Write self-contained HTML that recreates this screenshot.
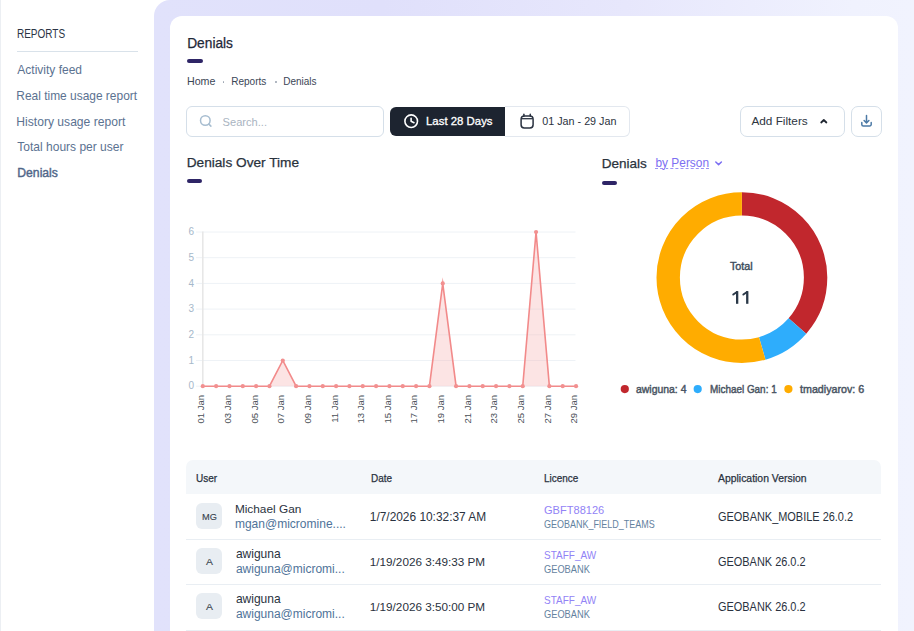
<!DOCTYPE html>
<html><head><meta charset="utf-8"><style>
html,body{margin:0;padding:0;width:914px;height:631px;overflow:hidden;background:#fff;font-family:"Liberation Sans",sans-serif;}
.r{position:absolute;}
.t{position:absolute;white-space:nowrap;line-height:1;}
svg{position:absolute;left:0;top:0;}
</style></head><body>
<div class="r" style="left:0px;top:0px;width:1px;height:631px;background:#eceff3"></div>
<div class="r" style="left:17px;top:51px;width:121px;height:1px;background:#d9e2ea"></div>
<div class="r" style="left:154px;top:0px;width:760px;height:640px;background:linear-gradient(90deg,#e1e2fb 0%,#e0e0fb 30%,#e7e7fc 62%,#f0f2fe 92%,#f1f3fe 100%);border-radius:16px 0 0 0"></div>
<div class="r" style="left:170px;top:16px;width:728px;height:684px;background:#fff;border-radius:12px"></div>
<div class="r" style="left:187px;top:59px;width:16px;height:4px;background:#2e2566;border-radius:2px"></div>
<div class="r" style="left:222.6px;top:81.1px;width:1.8000000000000114px;height:1.8000000000000114px;background:#9aa3b0;border-radius:50%"></div>
<div class="r" style="left:274.8px;top:81.1px;width:1.8000000000000114px;height:1.8000000000000114px;background:#9aa3b0;border-radius:50%"></div>
<div class="r" style="left:186px;top:106px;width:198px;height:31px;border:1px solid #d5dfe9;border-radius:6px;box-sizing:border-box"></div>
<div class="r" style="left:390px;top:107px;width:115px;height:29px;background:#1d2430;border-radius:6px 0 0 6px"></div>
<div class="r" style="left:505px;top:106px;width:125px;height:31px;border:1px solid #e3e8ef;border-left:none;border-radius:0 6px 6px 0;box-sizing:border-box"></div>
<div class="r" style="left:740px;top:106px;width:105px;height:31px;border:1px solid #d5dfe9;border-radius:7px;box-sizing:border-box"></div>
<div class="r" style="left:851px;top:106px;width:31px;height:31px;border:1px solid #d5dfe9;border-radius:7px;box-sizing:border-box"></div>
<div class="r" style="left:186.5px;top:179px;width:15.5px;height:4px;background:#2e2566;border-radius:2px"></div>
<div class="r" style="left:602px;top:181px;width:15px;height:4px;background:#2e2566;border-radius:2px"></div>
<div class="r" style="left:186px;top:460px;width:695px;height:34px;background:#f4f7fa;border-radius:7px 7px 0 0"></div>
<div class="r" style="left:186px;top:539px;width:695px;height:1px;background:#e9eef3"></div>
<div class="r" style="left:196px;top:503px;width:26px;height:26px;background:#e8edf2;border-radius:6px"></div>
<div class="r" style="left:186px;top:584px;width:695px;height:1px;background:#e9eef3"></div>
<div class="r" style="left:196px;top:548px;width:26px;height:26px;background:#e8edf2;border-radius:6px"></div>
<div class="r" style="left:186px;top:630px;width:695px;height:1px;background:#e9eef3"></div>
<div class="r" style="left:196px;top:593px;width:26px;height:26px;background:#e8edf2;border-radius:6px"></div>
<svg width="914" height="631" viewBox="0 0 914 631">
<circle cx="205.3" cy="120.5" r="4.8" fill="none" stroke="#a7bdd0" stroke-width="1.5"/><line x1="208.9" y1="124.1" x2="210.9" y2="126.1" stroke="#a7bdd0" stroke-width="1.5" stroke-linecap="round"/>
<circle cx="411.2" cy="121.2" r="6.3" fill="none" stroke="#fff" stroke-width="1.6"/><path d="M411.1 118.2v3.1l2.9 1.4" fill="none" stroke="#fff" stroke-width="1.6" stroke-linecap="round" stroke-linejoin="round"/>
<rect x="521.1" y="116" width="12" height="12" rx="3.2" fill="none" stroke="#2a3240" stroke-width="1.5"/><line x1="521.5" y1="118.7" x2="532.7" y2="118.7" stroke="#2a3240" stroke-width="1.3"/><line x1="523.9" y1="114.3" x2="523.9" y2="116.3" stroke="#2a3240" stroke-width="1.4" stroke-linecap="round"/><line x1="530.3" y1="114.3" x2="530.3" y2="116.3" stroke="#2a3240" stroke-width="1.4" stroke-linecap="round"/>
<path d="M821.2 122.5l2.6-2.5 2.6 2.5" fill="none" stroke="#1f2630" stroke-width="1.75" stroke-linecap="round" stroke-linejoin="round"/>
<path d="M866.5 115.5v7.3M864.1 120.5l2.4 2.4 2.4-2.4M861.8 122.5v1.9a1.5 1.5 0 0 0 1.5 1.5h6.4a1.5 1.5 0 0 0 1.5-1.5v-1.9" fill="none" stroke="#4c7aa6" stroke-width="1.5" stroke-linecap="round" stroke-linejoin="round"/>
<path d="M715.8 162l2.8 2.6 2.8-2.6" fill="none" stroke="#7b6ef2" stroke-width="1.5" stroke-linecap="round" stroke-linejoin="round"/>
<line x1="196" y1="386.20" x2="575.5" y2="386.20" stroke="#eef2f6" stroke-width="1"/>
<line x1="196" y1="360.50" x2="575.5" y2="360.50" stroke="#eef2f6" stroke-width="1"/>
<line x1="196" y1="334.80" x2="575.5" y2="334.80" stroke="#eef2f6" stroke-width="1"/>
<line x1="196" y1="309.10" x2="575.5" y2="309.10" stroke="#eef2f6" stroke-width="1"/>
<line x1="196" y1="283.40" x2="575.5" y2="283.40" stroke="#eef2f6" stroke-width="1"/>
<line x1="196" y1="257.70" x2="575.5" y2="257.70" stroke="#eef2f6" stroke-width="1"/>
<line x1="196" y1="232.00" x2="575.5" y2="232.00" stroke="#eef2f6" stroke-width="1"/>
<line x1="202.8" y1="231.5" x2="202.8" y2="386" stroke="#e6e6e6" stroke-width="1.5"/>
<polygon points="202.80,386.20 216.13,386.20 229.46,386.20 242.79,386.20 256.12,386.20 269.45,386.20 282.78,360.50 296.11,386.20 309.44,386.20 322.77,386.20 336.10,386.20 349.43,386.20 362.76,386.20 376.09,386.20 389.42,386.20 402.75,386.20 416.08,386.20 429.41,386.20 442.74,283.40 456.07,386.20 469.40,386.20 482.73,386.20 496.06,386.20 509.39,386.20 522.72,386.20 536.05,232.00 549.38,386.20 562.71,386.20 576.04,386.20 576.04,386.2 202.80,386.2" fill="#f6b3b3" fill-opacity="0.35"/>
<polyline points="202.80,386.20 216.13,386.20 229.46,386.20 242.79,386.20 256.12,386.20 269.45,386.20 282.78,360.50 296.11,386.20 309.44,386.20 322.77,386.20 336.10,386.20 349.43,386.20 362.76,386.20 376.09,386.20 389.42,386.20 402.75,386.20 416.08,386.20 429.41,386.20 442.74,283.40 456.07,386.20 469.40,386.20 482.73,386.20 496.06,386.20 509.39,386.20 522.72,386.20 536.05,232.00 549.38,386.20 562.71,386.20 576.04,386.20" fill="none" stroke="#f28a8a" stroke-width="1.6" stroke-linejoin="miter" stroke-miterlimit="10"/>
<circle cx="202.80" cy="386.20" r="2.1" fill="#f29090"/>
<circle cx="216.13" cy="386.20" r="2.1" fill="#f29090"/>
<circle cx="229.46" cy="386.20" r="2.1" fill="#f29090"/>
<circle cx="242.79" cy="386.20" r="2.1" fill="#f29090"/>
<circle cx="256.12" cy="386.20" r="2.1" fill="#f29090"/>
<circle cx="269.45" cy="386.20" r="2.1" fill="#f29090"/>
<circle cx="282.78" cy="360.50" r="2.1" fill="#f29090"/>
<circle cx="296.11" cy="386.20" r="2.1" fill="#f29090"/>
<circle cx="309.44" cy="386.20" r="2.1" fill="#f29090"/>
<circle cx="322.77" cy="386.20" r="2.1" fill="#f29090"/>
<circle cx="336.10" cy="386.20" r="2.1" fill="#f29090"/>
<circle cx="349.43" cy="386.20" r="2.1" fill="#f29090"/>
<circle cx="362.76" cy="386.20" r="2.1" fill="#f29090"/>
<circle cx="376.09" cy="386.20" r="2.1" fill="#f29090"/>
<circle cx="389.42" cy="386.20" r="2.1" fill="#f29090"/>
<circle cx="402.75" cy="386.20" r="2.1" fill="#f29090"/>
<circle cx="416.08" cy="386.20" r="2.1" fill="#f29090"/>
<circle cx="429.41" cy="386.20" r="2.1" fill="#f29090"/>
<circle cx="442.74" cy="283.40" r="2.1" fill="#f29090"/>
<circle cx="456.07" cy="386.20" r="2.1" fill="#f29090"/>
<circle cx="469.40" cy="386.20" r="2.1" fill="#f29090"/>
<circle cx="482.73" cy="386.20" r="2.1" fill="#f29090"/>
<circle cx="496.06" cy="386.20" r="2.1" fill="#f29090"/>
<circle cx="509.39" cy="386.20" r="2.1" fill="#f29090"/>
<circle cx="522.72" cy="386.20" r="2.1" fill="#f29090"/>
<circle cx="536.05" cy="232.00" r="2.1" fill="#f29090"/>
<circle cx="549.38" cy="386.20" r="2.1" fill="#f29090"/>
<circle cx="562.71" cy="386.20" r="2.1" fill="#f29090"/>
<circle cx="576.04" cy="386.20" r="2.1" fill="#f29090"/>
<circle cx="741.9" cy="277.6" r="73.70" fill="none" stroke="#c1272d" stroke-width="23.40" stroke-dasharray="168.389 463.071" stroke-dashoffset="0.000" transform="rotate(-90 741.9 277.6)"/>
<circle cx="741.9" cy="277.6" r="73.70" fill="none" stroke="#2eadfc" stroke-width="23.40" stroke-dasharray="42.097 463.071" stroke-dashoffset="-168.389" transform="rotate(-90 741.9 277.6)"/>
<circle cx="741.9" cy="277.6" r="73.70" fill="none" stroke="#ffac00" stroke-width="23.40" stroke-dasharray="252.584 463.071" stroke-dashoffset="-210.487" transform="rotate(-90 741.9 277.6)"/>
<circle cx="624.8" cy="389.1" r="4.1" fill="#c1272d"/>
<circle cx="697.7" cy="389.1" r="4.1" fill="#2eadfc"/>
<circle cx="788.4" cy="389.1" r="4.1" fill="#ffac00"/>
<path d="M733.25 294.6 L736.95 291.9" fill="none" stroke="#2a3848" stroke-width="1.9" stroke-linecap="round"/><rect x="736.00" y="291.2" width="2.3" height="12.6" fill="#2a3848"/>
<path d="M743.35 294.6 L747.05 291.9" fill="none" stroke="#2a3848" stroke-width="1.9" stroke-linecap="round"/><rect x="746.10" y="291.2" width="2.3" height="12.6" fill="#2a3848"/>
</svg>
<div class="t" style="left:16.57px;top:28px;font-size:12.000px;color:#2b3445;transform:scaleX(0.8316);transform-origin:0 0;">REPORTS</div>
<div class="t" style="left:17.30px;top:64px;font-size:12.000px;color:#5b7291;">Activity feed</div>
<div class="t" style="left:16.30px;top:91px;font-size:11.951px;color:#5b7291;">Real time usage report</div>
<div class="t" style="left:16.30px;top:116px;font-size:12.124px;color:#5b7291;">History usage report</div>
<div class="t" style="left:17.30px;top:141px;font-size:12.023px;color:#5b7291;">Total hours per user</div>
<div class="t" style="left:17.30px;top:167px;font-size:12.181px;color:#4f6689;-webkit-text-stroke:0.4px #4f6689;">Denials</div>
<div class="t" style="left:187.20px;top:37px;font-size:13.744px;color:#1f2838;-webkit-text-stroke:0.25px #1f2838;">Denials</div>
<div class="t" style="left:187.00px;top:76px;font-size:10.663px;color:#3b4656;">Home</div>
<div class="t" style="left:231.20px;top:77px;font-size:10.065px;color:#3b4656;">Reports</div>
<div class="t" style="left:283.20px;top:77px;font-size:10.007px;color:#3b4656;">Denials</div>
<div class="t" style="left:222.60px;top:117px;font-size:11.108px;color:#a9b4c1;">Search...</div>
<div class="t" style="left:426.00px;top:116px;font-size:11.415px;color:#ffffff;-webkit-text-stroke:0.3px #ffffff;">Last 28 Days</div>
<div class="t" style="left:542.30px;top:116px;font-size:10.752px;color:#2a3240;">01 Jan - 29 Jan</div>
<div class="t" style="left:751.40px;top:115px;font-size:11.790px;color:#2d3541;">Add Filters</div>
<div class="t" style="left:186.70px;top:156px;font-size:13.675px;color:#2a323d;-webkit-text-stroke:0.25px #2a323d;">Denials Over Time</div>
<div class="t" style="left:601.70px;top:157px;font-size:13.560px;color:#2a323d;-webkit-text-stroke:0.25px #2a323d;">Denials</div>
<div class="t" style="left:655.50px;top:158px;font-size:11.908px;color:#7b6ef2;text-decoration:underline dashed #9b92f5;text-underline-offset:1px;">by Person</div>
<div class="t" style="left:730.00px;top:261px;font-size:10.768px;color:#3c4b5c;-webkit-text-stroke:0.4px #3c4b5c;">Total</div>
<div class="t" style="left:635.60px;top:384px;font-size:10.800px;color:#4a5563;transform:scaleX(0.9660);transform-origin:0 0;-webkit-text-stroke:0.45px #4a5563;">awiguna: 4</div>
<div class="t" style="left:710.00px;top:384px;font-size:10.800px;color:#4a5563;transform:scaleX(0.9178);transform-origin:0 0;-webkit-text-stroke:0.45px #4a5563;">Michael Gan: 1</div>
<div class="t" style="left:799.80px;top:384px;font-size:10.800px;color:#4a5563;transform:scaleX(0.9908);transform-origin:0 0;-webkit-text-stroke:0.45px #4a5563;">tmadiyarov: 6</div>
<div class="t" style="left:196.30px;top:473px;font-size:10.800px;color:#2a3240;transform:scaleX(0.9261);transform-origin:0 0;-webkit-text-stroke:0.25px #2a3240;">User</div>
<div class="t" style="left:370.50px;top:473px;font-size:10.800px;color:#2a3240;transform:scaleX(0.9217);transform-origin:0 0;-webkit-text-stroke:0.25px #2a3240;">Date</div>
<div class="t" style="left:544.20px;top:473px;font-size:10.800px;color:#2a3240;transform:scaleX(0.9189);transform-origin:0 0;-webkit-text-stroke:0.25px #2a3240;">Licence</div>
<div class="t" style="left:718.10px;top:473px;font-size:10.800px;color:#2a3240;transform:scaleX(0.9641);transform-origin:0 0;-webkit-text-stroke:0.25px #2a3240;">Application Version</div>
<div class="t" style="left:201.90px;top:513px;font-size:9.300px;color:#343d4a;transform:scaleX(0.9933);transform-origin:0 0;-webkit-text-stroke:0.1px #343d4a;">MG</div>
<div class="t" style="left:234.90px;top:504px;font-size:11.837px;color:#2a3240;">Michael Gan</div>
<div class="t" style="left:234.90px;top:518px;font-size:12.022px;color:#4f7399;">mgan@micromine....</div>
<div class="t" style="left:369.80px;top:512px;font-size:11.907px;color:#2a3240;">1/7/2026 10:32:37 AM</div>
<div class="t" style="left:544.10px;top:505px;font-size:11.800px;color:#9283f6;transform:scaleX(0.9375);transform-origin:0 0;">GBFT88126</div>
<div class="t" style="left:544.10px;top:519px;font-size:10.600px;color:#6482a0;transform:scaleX(0.8473);transform-origin:0 0;">GEOBANK_FIELD_TEAMS</div>
<div class="t" style="left:718.20px;top:511px;font-size:12.000px;color:#2a3240;transform:scaleX(0.9122);transform-origin:0 0;">GEOBANK_MOBILE 26.0.2</div>
<div class="t" style="left:206.10px;top:558px;font-size:9.300px;color:#343d4a;transform:scaleX(1.1167);transform-origin:0 0;-webkit-text-stroke:0.1px #343d4a;">A</div>
<div class="t" style="left:235.90px;top:548px;font-size:12.029px;color:#2a3240;">awiguna</div>
<div class="t" style="left:235.90px;top:563px;font-size:12.011px;color:#4f7399;">awiguna@micromi...</div>
<div class="t" style="left:369.80px;top:556px;font-size:11.731px;color:#2a3240;">1/19/2026 3:49:33 PM</div>
<div class="t" style="left:544.10px;top:550px;font-size:11.800px;color:#9283f6;transform:scaleX(0.8468);transform-origin:0 0;">STAFF_AW</div>
<div class="t" style="left:544.10px;top:564px;font-size:10.600px;color:#6482a0;transform:scaleX(0.8750);transform-origin:0 0;">GEOBANK</div>
<div class="t" style="left:718.20px;top:556px;font-size:12.000px;color:#2a3240;transform:scaleX(0.9115);transform-origin:0 0;">GEOBANK 26.0.2</div>
<div class="t" style="left:206.10px;top:603px;font-size:9.300px;color:#343d4a;transform:scaleX(1.1167);transform-origin:0 0;-webkit-text-stroke:0.1px #343d4a;">A</div>
<div class="t" style="left:235.90px;top:593px;font-size:12.029px;color:#2a3240;">awiguna</div>
<div class="t" style="left:235.90px;top:608px;font-size:12.011px;color:#4f7399;">awiguna@micromi...</div>
<div class="t" style="left:369.80px;top:601px;font-size:11.731px;color:#2a3240;">1/19/2026 3:50:00 PM</div>
<div class="t" style="left:544.10px;top:595px;font-size:11.800px;color:#9283f6;transform:scaleX(0.8468);transform-origin:0 0;">STAFF_AW</div>
<div class="t" style="left:544.10px;top:609px;font-size:10.600px;color:#6482a0;transform:scaleX(0.8750);transform-origin:0 0;">GEOBANK</div>
<div class="t" style="left:718.20px;top:601px;font-size:12.000px;color:#2a3240;transform:scaleX(0.9115);transform-origin:0 0;">GEOBANK 26.0.2</div>
<div class="t" style="left:170px;width:24px;text-align:right;top:381.34px;font-size:10px;color:#a6b8ca">0</div>
<div class="t" style="left:170px;width:24px;text-align:right;top:355.64px;font-size:10px;color:#a6b8ca">1</div>
<div class="t" style="left:170px;width:24px;text-align:right;top:329.94px;font-size:10px;color:#a6b8ca">2</div>
<div class="t" style="left:170px;width:24px;text-align:right;top:304.24px;font-size:10px;color:#a6b8ca">3</div>
<div class="t" style="left:170px;width:24px;text-align:right;top:278.54px;font-size:10px;color:#a6b8ca">4</div>
<div class="t" style="left:170px;width:24px;text-align:right;top:252.84px;font-size:10px;color:#a6b8ca">5</div>
<div class="t" style="left:170px;width:24px;text-align:right;top:227.13px;font-size:10px;color:#a6b8ca">6</div>
<div class="t" style="left:201.20px;top:395.2px;font-size:9.5px;color:#4a4f57;transform-origin:0 0;transform:rotate(-90deg) translate(-100%,-50%);text-align:right;width:40px;line-height:12px;">01 Jan</div>
<div class="t" style="left:227.86px;top:395.2px;font-size:9.5px;color:#4a4f57;transform-origin:0 0;transform:rotate(-90deg) translate(-100%,-50%);text-align:right;width:40px;line-height:12px;">03 Jan</div>
<div class="t" style="left:254.52px;top:395.2px;font-size:9.5px;color:#4a4f57;transform-origin:0 0;transform:rotate(-90deg) translate(-100%,-50%);text-align:right;width:40px;line-height:12px;">05 Jan</div>
<div class="t" style="left:281.18px;top:395.2px;font-size:9.5px;color:#4a4f57;transform-origin:0 0;transform:rotate(-90deg) translate(-100%,-50%);text-align:right;width:40px;line-height:12px;">07 Jan</div>
<div class="t" style="left:307.84px;top:395.2px;font-size:9.5px;color:#4a4f57;transform-origin:0 0;transform:rotate(-90deg) translate(-100%,-50%);text-align:right;width:40px;line-height:12px;">09 Jan</div>
<div class="t" style="left:334.50px;top:395.2px;font-size:9.5px;color:#4a4f57;transform-origin:0 0;transform:rotate(-90deg) translate(-100%,-50%);text-align:right;width:40px;line-height:12px;">11 Jan</div>
<div class="t" style="left:361.16px;top:395.2px;font-size:9.5px;color:#4a4f57;transform-origin:0 0;transform:rotate(-90deg) translate(-100%,-50%);text-align:right;width:40px;line-height:12px;">13 Jan</div>
<div class="t" style="left:387.82px;top:395.2px;font-size:9.5px;color:#4a4f57;transform-origin:0 0;transform:rotate(-90deg) translate(-100%,-50%);text-align:right;width:40px;line-height:12px;">15 Jan</div>
<div class="t" style="left:414.48px;top:395.2px;font-size:9.5px;color:#4a4f57;transform-origin:0 0;transform:rotate(-90deg) translate(-100%,-50%);text-align:right;width:40px;line-height:12px;">17 Jan</div>
<div class="t" style="left:441.14px;top:395.2px;font-size:9.5px;color:#4a4f57;transform-origin:0 0;transform:rotate(-90deg) translate(-100%,-50%);text-align:right;width:40px;line-height:12px;">19 Jan</div>
<div class="t" style="left:467.80px;top:395.2px;font-size:9.5px;color:#4a4f57;transform-origin:0 0;transform:rotate(-90deg) translate(-100%,-50%);text-align:right;width:40px;line-height:12px;">21 Jan</div>
<div class="t" style="left:494.46px;top:395.2px;font-size:9.5px;color:#4a4f57;transform-origin:0 0;transform:rotate(-90deg) translate(-100%,-50%);text-align:right;width:40px;line-height:12px;">23 Jan</div>
<div class="t" style="left:521.12px;top:395.2px;font-size:9.5px;color:#4a4f57;transform-origin:0 0;transform:rotate(-90deg) translate(-100%,-50%);text-align:right;width:40px;line-height:12px;">25 Jan</div>
<div class="t" style="left:547.78px;top:395.2px;font-size:9.5px;color:#4a4f57;transform-origin:0 0;transform:rotate(-90deg) translate(-100%,-50%);text-align:right;width:40px;line-height:12px;">27 Jan</div>
<div class="t" style="left:574.44px;top:395.2px;font-size:9.5px;color:#4a4f57;transform-origin:0 0;transform:rotate(-90deg) translate(-100%,-50%);text-align:right;width:40px;line-height:12px;">29 Jan</div>
</body></html>
